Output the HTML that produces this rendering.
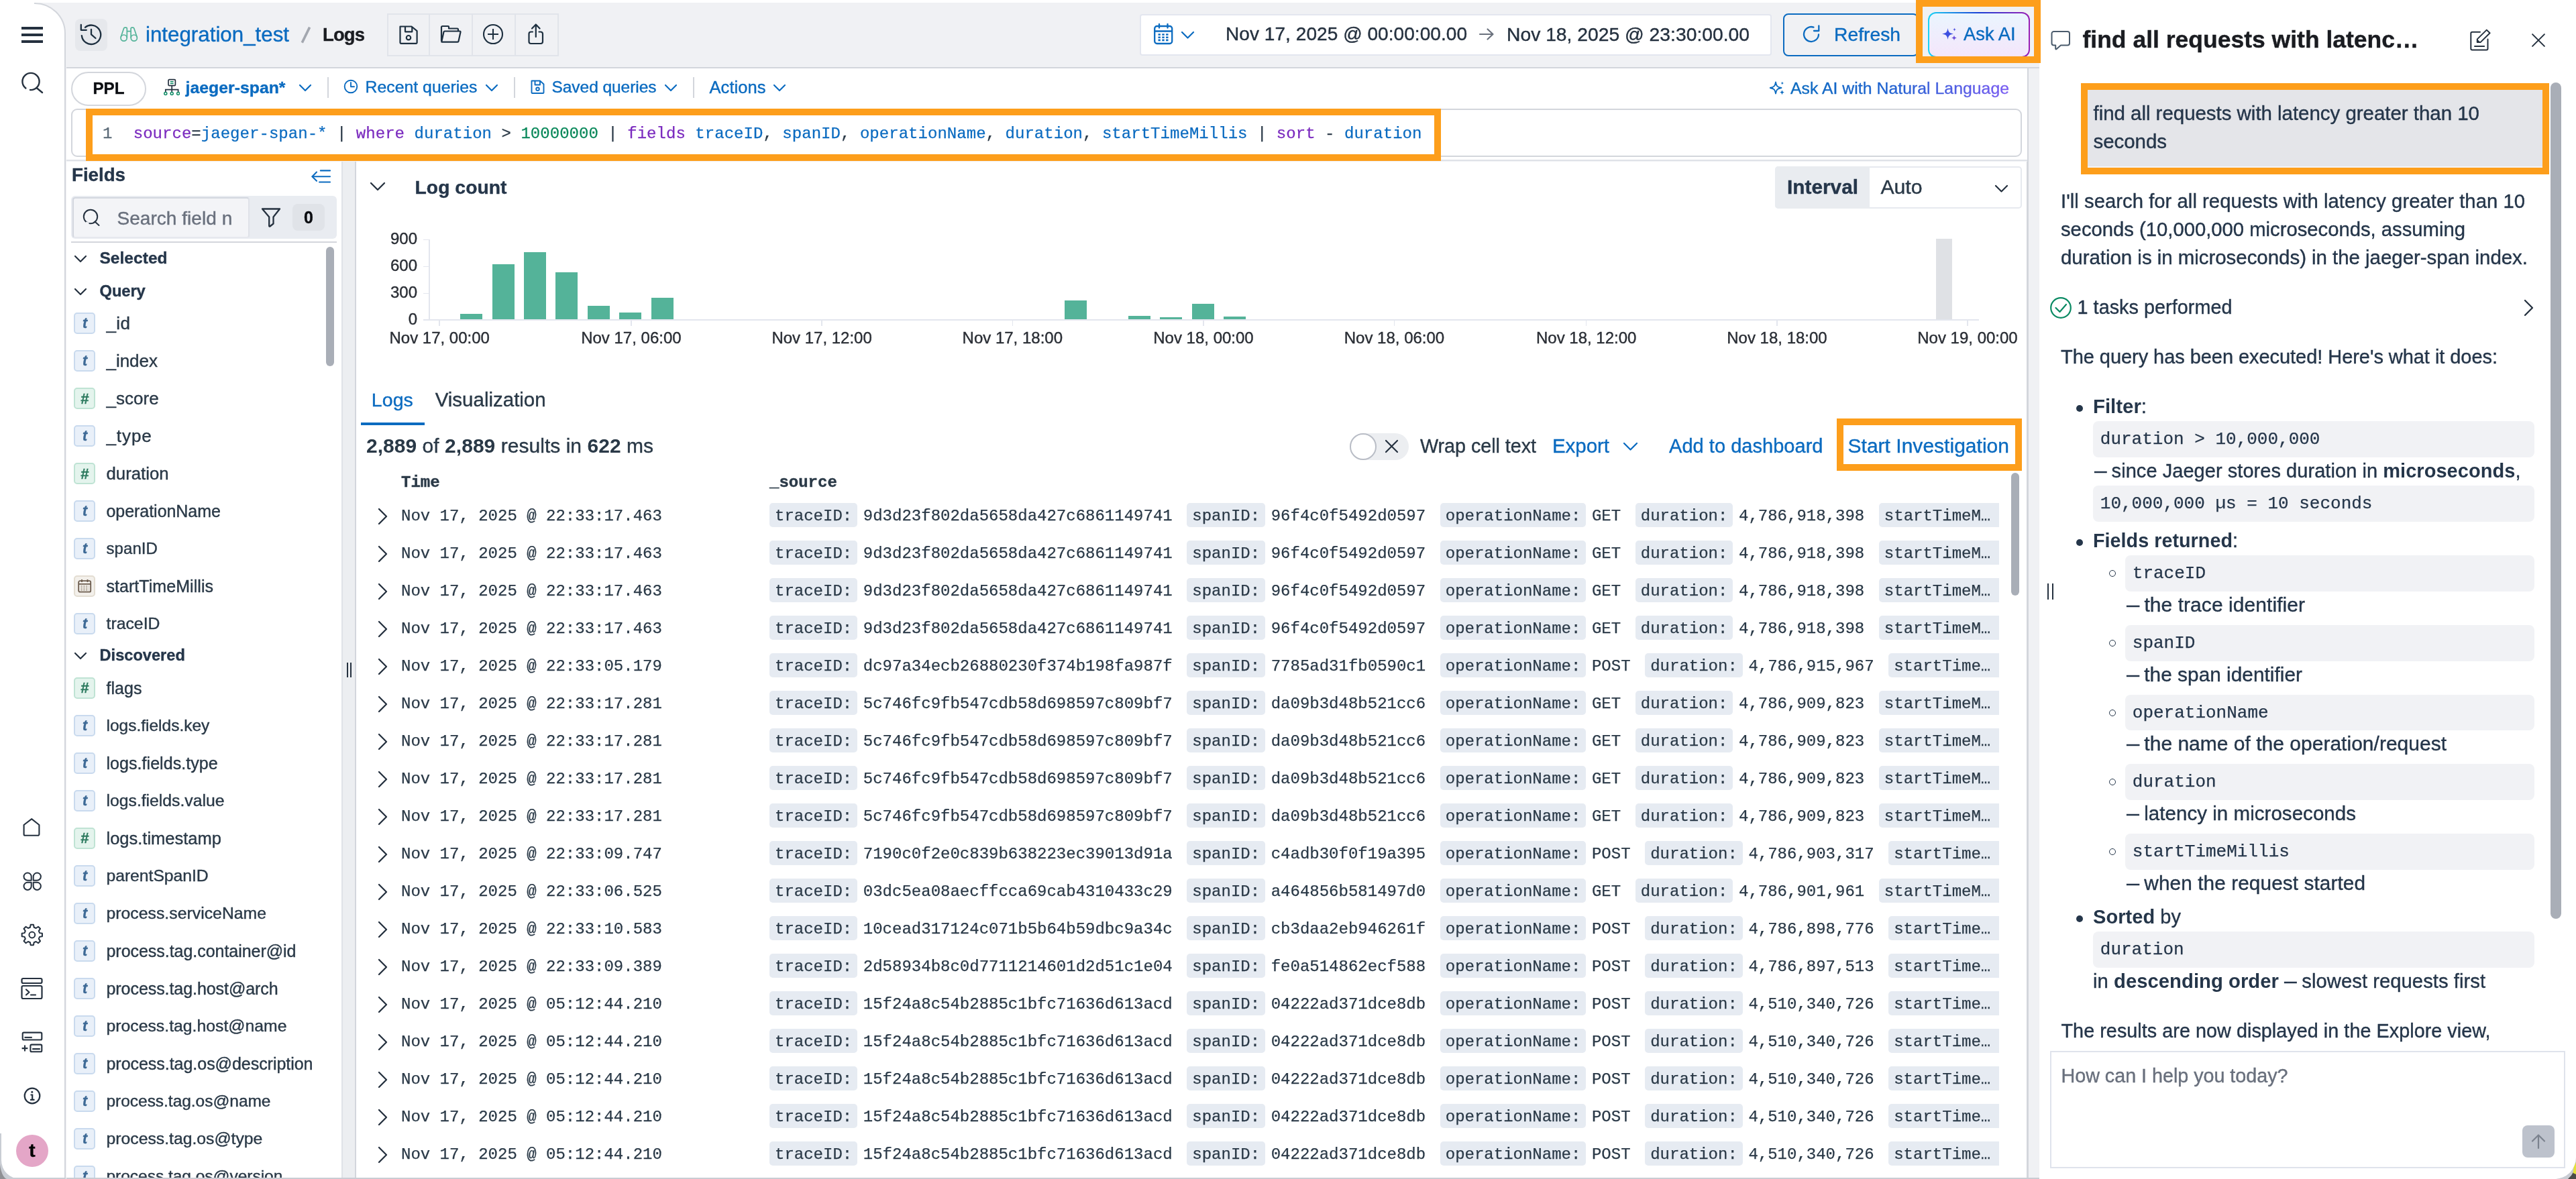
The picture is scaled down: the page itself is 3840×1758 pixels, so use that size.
<!DOCTYPE html>
<html lang="en"><head><meta charset="utf-8"><title>Logs - Explore</title><style>
*{box-sizing:border-box;margin:0;padding:0}
html,body{width:3840px;height:1758px;overflow:hidden;background:#fff}
body{position:relative;font-family:"Liberation Sans",sans-serif;color:#2a3947}
#app{position:absolute;left:0;top:0;width:3840px;height:1758px;will-change:transform}
.a{position:absolute}
.t{white-space:pre;-webkit-text-stroke:.4px}
.t b,b.t{-webkit-text-stroke:0}
b{font-weight:700}
.r{position:absolute;left:1147px;width:1833px;height:44px;overflow:hidden;white-space:nowrap;font:24px/44px 'Liberation Mono',monospace;color:#2a3947;-webkit-text-stroke:.25px}.r i{font-style:normal;display:inline-block;height:36px;line-height:40px;background:#e6ebf2;border-radius:5px;padding:0 8px;margin-right:8.6px}.r u{text-decoration:none;margin-right:21.6px}
</style></head><body><div id="app">
<div class="a" style="left:0px;top:4px;width:3040px;height:1754px;background:#f0f1f4;"></div>
<svg class="a" style="left:0px;top:0px;" width="100" height="1758" viewBox="0 0 100 1758" fill="none"><path d="M0 4 H51 A46 46 0 0 1 97 50 V1758 H0 Z" fill="#fff"/><path d="M51 5 A45 45 0 0 1 97 50 V1758" stroke="#d3d6dc" stroke-width="2"/></svg>
<div class="a" style="left:99px;top:100px;width:2941px;height:2px;background:#d3d6dc;"></div>
<div class="a" style="left:99px;top:102px;width:2923px;height:137px;background:#fff;"></div>
<div class="a" style="left:99px;top:238px;width:2923px;height:2px;background:#dfe2e8;"></div>
<div class="a" style="left:99px;top:241px;width:411px;height:1517px;background:#fff;"></div>
<div class="a" style="left:510px;top:241px;width:19px;height:1515px;background:#eceef1;"></div>
<div class="a" style="left:509px;top:241px;width:2px;height:1515px;background:#dfe2e7;"></div>
<div class="a" style="left:529px;top:241px;width:2494px;height:1517px;background:#fff;border:2px solid #d3d6dc;border-top:0;border-bottom:0;"></div>
<div class="a" style="left:3040px;top:0px;width:800px;height:1758px;background:#fff;"></div>
<div class="a" style="left:3022px;top:102px;width:2px;height:1656px;background:#d3d6dc;"></div>
<div class="a" style="left:32px;top:40px;width:32px;height:4px;background:#25313f;"></div>
<div class="a" style="left:32px;top:50px;width:32px;height:4px;background:#25313f;"></div>
<div class="a" style="left:32px;top:60px;width:32px;height:4px;background:#25313f;"></div>
<svg class="a" style="left:30px;top:105px;" width="38" height="38" viewBox="0 0 38 38" fill="none"><circle cx="16" cy="16.5" r="12.6" stroke="#25313f" stroke-width="2.4"/><path d="M24.5 26 L33 33" stroke="#25313f" stroke-width="2.4" stroke-linecap="round"/><path d="M9 27.5 A12.6 12.6 0 0 0 14 29" stroke="#fff" stroke-width="4"/></svg>
<svg class="a" style="left:32px;top:1218px;" width="32" height="32" viewBox="0 0 32 32" fill="none"><path d="M3.6 12 L15.2 3.2 L26.4 12 V26 a1.8 1.8 0 0 1 -1.8 1.8 H5.4 a1.8 1.8 0 0 1 -1.8 -1.8 Z" stroke="#25313f" stroke-width="2.1" stroke-linejoin="round"/></svg>
<svg class="a" style="left:32px;top:1298px;" width="32" height="32" viewBox="0 0 32 32" fill="none"><path d="M9.1 3.5 A5.6 5.6 0 0 0 3.5 9.1 A5.6 5.6 0 0 0 9.1 14.7 H14.7 V9.1 A5.6 5.6 0 0 0 9.1 3.5 Z" stroke="#25313f" stroke-width="2" stroke-linejoin="round"/><path d="M23.299999999999997 3.5 A5.6 5.6 0 0 1 28.9 9.1 A5.6 5.6 0 0 1 23.299999999999997 14.7 H17.7 V9.1 A5.6 5.6 0 0 1 23.299999999999997 3.5 Z" stroke="#25313f" stroke-width="2" stroke-linejoin="round"/><path d="M9.1 28.9 A5.6 5.6 0 0 1 3.5 23.299999999999997 A5.6 5.6 0 0 1 9.1 17.7 H14.7 V23.299999999999997 A5.6 5.6 0 0 1 9.1 28.9 Z" stroke="#25313f" stroke-width="2" stroke-linejoin="round"/><path d="M23.299999999999997 28.9 A5.6 5.6 0 0 0 28.9 23.299999999999997 A5.6 5.6 0 0 0 23.299999999999997 17.7 H17.7 V23.299999999999997 A5.6 5.6 0 0 0 23.299999999999997 28.9 Z" stroke="#25313f" stroke-width="2" stroke-linejoin="round"/></svg>
<svg class="a" style="left:30px;top:1376px;" width="36" height="36" viewBox="0 0 36 36" fill="none"><path d="M32.95 15.84 L32.95 20.16 L29.04 20.88 L27.78 23.90 L30.04 27.19 L26.99 30.24 L23.70 27.98 L20.68 29.24 L19.96 33.15 L15.64 33.15 L14.92 29.24 L11.90 27.98 L8.61 30.24 L5.56 27.19 L7.82 23.90 L6.56 20.88 L2.65 20.16 L2.65 15.84 L6.56 15.12 L7.82 12.10 L5.56 8.81 L8.61 5.76 L11.90 8.02 L14.92 6.76 L15.64 2.85 L19.96 2.85 L20.68 6.76 L23.70 8.02 L26.99 5.76 L30.04 8.81 L27.78 12.10 L29.04 15.12 Z" stroke="#25313f" stroke-width="2" stroke-linejoin="round"/><circle cx="17.8" cy="18" r="4.4" stroke="#25313f" stroke-width="2"/></svg>
<svg class="a" style="left:30px;top:1456px;" width="36" height="36" viewBox="0 0 36 36" fill="none"><rect x="2.5" y="3" width="30" height="7" rx="2" stroke="#25313f" stroke-width="2.2"/><rect x="2.5" y="14" width="30" height="19" rx="2" stroke="#25313f" stroke-width="2.2"/><path d="M9 19.5 L13.5 23.5 L9 27.5 M16 27.5 H23" stroke="#25313f" stroke-width="2.2" stroke-linecap="round" stroke-linejoin="round"/></svg>
<svg class="a" style="left:30px;top:1536px;" width="36" height="36" viewBox="0 0 36 36" fill="none"><rect x="3.7" y="3.6" width="28.6" height="10.9" rx="1.8" stroke="#25313f" stroke-width="2.1"/><path d="M6.5 10.9 H17.8" stroke="#25313f" stroke-width="2.1"/><rect x="15.4" y="21.6" width="16.9" height="10.7" rx="1.8" stroke="#25313f" stroke-width="2.1"/><path d="M18.2 28.1 H29.8 M2.6 27.1 H11.4 M7 22.6 V31.6" stroke="#25313f" stroke-width="2.1"/></svg>
<svg class="a" style="left:34px;top:1620px;" width="28" height="28" viewBox="0 0 28 28" fill="none"><circle cx="14" cy="14" r="11.3" stroke="#25313f" stroke-width="2.2"/><path d="M11.5 12.5 H14.2 V19.5 M11 19.8 H17.5" stroke="#25313f" stroke-width="2.2"/><circle cx="13.8" cy="8.3" r="1.5" fill="#25313f"/></svg>
<div class="a" style="left:24px;top:1692px;width:48px;height:48px;background:#e4a6c7;border-radius:24px;"></div>
<div class="a t" style="left:43.34px;top:1695px;line-height:42px;font-size:28px;color:#000;font-family:'Liberation Sans',sans-serif;font-weight:700;">t</div>
<div class="a" style="left:0px;top:1756px;width:98px;height:2px;background:#c9cdd4;"></div>
<svg class="a" style="left:0px;top:1690px;" width="40" height="68" viewBox="0 0 40 68" fill="none"><path d="M0 0 V68 H30 A28 28 0 0 1 2 40 V0 Z" fill="#c9cdd4"/><path d="M0 30 V68 H10 A12 30 0 0 1 0 30 Z" fill="#8f9094"/></svg>
<div class="a" style="left:112px;top:28px;width:48px;height:48px;background:#e6e8ec;border-radius:8px;"></div>
<svg class="a" style="left:116px;top:32px;" width="40" height="40" viewBox="0 0 40 40" fill="none"><path d="M5.85 21.1 A14.2 14.2 0 1 0 10.9 8.8" stroke="#1d2f3f" stroke-width="2.3" stroke-linecap="round"/><path d="M4.8 5 V12.8 H12.8" stroke="#1d2f3f" stroke-width="2.3" stroke-linecap="round" stroke-linejoin="round"/><path d="M20 11.8 V19.3 L26.5 25" stroke="#1d2f3f" stroke-width="2.3" stroke-linecap="round" stroke-linejoin="round"/></svg>
<svg class="a" style="left:177px;top:39px;" width="30" height="25" viewBox="0 0 30 25" fill="none"><circle cx="7.6" cy="17.6" r="4.6" stroke="#54b399" stroke-width="1.7"/><circle cx="22.8" cy="17.6" r="4.6" stroke="#54b399" stroke-width="1.7"/><path d="M3.1 16.5 L7.6 3.2 a1.5 1.5 0 0 1 1.4 -1 H11 a1.3 1.3 0 0 1 1.3 1.3 V17.6 M27.3 16.5 L22.8 3.2 a1.5 1.5 0 0 0 -1.4 -1 H19.4 a1.3 1.3 0 0 0 -1.3 1.3 V17.6 M12.3 7.6 H18.1" stroke="#54b399" stroke-width="1.7" stroke-linejoin="round"/></svg>
<div class="a t" style="left:217.00px;top:28.5px;line-height:45px;font-size:31.25px;color:#0b6bc0;font-family:'Liberation Sans',sans-serif;letter-spacing:0.021px;">integration_test</div>
<svg class="a" style="left:444px;top:36px;" width="24" height="32" viewBox="0 0 24 32" fill="none"><path d="M6.3 27.6 L17.6 4.6" stroke="#a3a7af" stroke-width="3.6"/></svg>
<div class="a t" style="left:481.00px;top:28.5px;line-height:45px;font-size:27.5px;color:#1a1c21;font-family:'Liberation Sans',sans-serif;font-weight:700;letter-spacing:-0.897px;">Logs</div>
<div class="a" style="left:577px;top:20px;width:256px;height:64px;border:2px solid #e1e4ea;"></div>
<div class="a" style="left:639px;top:22px;width:2px;height:60px;background:#e1e4ea;"></div>
<div class="a" style="left:703px;top:22px;width:2px;height:60px;background:#e1e4ea;"></div>
<div class="a" style="left:767px;top:22px;width:2px;height:60px;background:#e1e4ea;"></div>
<svg class="a" style="left:592px;top:35px;" width="34" height="34" viewBox="0 0 34 34" fill="none"><path d="M4.5 4.5 H21.5 L29.6 11.2 V28.6 a1.2 1.2 0 0 1 -1.2 1.2 H5.7 a1.2 1.2 0 0 1 -1.2 -1.2 Z" stroke="#1d2f3f" stroke-width="2.2" stroke-linejoin="round"/><path d="M12 5 V12.3 H22.3 V5" stroke="#1d2f3f" stroke-width="2.2" stroke-linejoin="round"/><circle cx="17" cy="21.2" r="3.2" stroke="#1d2f3f" stroke-width="2.2"/></svg>
<svg class="a" style="left:654px;top:35px;" width="36" height="32" viewBox="0 0 36 32" fill="none"><path d="M4 26 V5.5 a1.5 1.5 0 0 1 1.5 -1.5 H14 a1 1 0 0 1 1 1 V7.5 H27.5 a1.5 1.5 0 0 1 1.5 1.5 V11.5" stroke="#1d2f3f" stroke-width="2.2" stroke-linejoin="round"/><path d="M4.2 27.5 L7.5 12.5 a1.5 1.5 0 0 1 1.4 -1 H31.5 a1 1 0 0 1 1 1.3 L29.5 26.5 a1.5 1.5 0 0 1 -1.5 1.2 H5 a1 1 0 0 1 -0.8 -0.2 Z" stroke="#1d2f3f" stroke-width="2.2" stroke-linejoin="round"/></svg>
<svg class="a" style="left:718px;top:34px;" width="34" height="34" viewBox="0 0 34 34" fill="none"><circle cx="17" cy="17" r="14" stroke="#1d2f3f" stroke-width="2.1"/><path d="M9 17 H25 M17 9 V25" stroke="#1d2f3f" stroke-width="2.1"/></svg>
<svg class="a" style="left:784px;top:33px;" width="30" height="36" viewBox="0 0 30 36" fill="none"><path d="M10 14.5 H7.5 a3 3 0 0 0 -3 3 V29 a3 3 0 0 0 3 3 H22 a3 3 0 0 0 3 -3 V17.5 a3 3 0 0 0 -3 -3 H19.5" stroke="#1d2f3f" stroke-width="2.2" stroke-linecap="round"/><path d="M14.8 22 V4 M9 9.5 L14.8 3.5 L20.6 9.5" stroke="#1d2f3f" stroke-width="2.2" stroke-linecap="round" stroke-linejoin="round"/></svg>
<div class="a" style="left:1699px;top:21px;width:942px;height:62px;background:#fff;border:2px solid #e3e6ef;border-radius:4px;"></div>
<svg class="a" style="left:1719px;top:34px;" width="32" height="34" viewBox="0 0 32 34" fill="none"><rect x="2.2" y="5" width="26" height="26" rx="3.5" stroke="#0b6bc0" stroke-width="2.3"/><path d="M2.5 12.5 H28 M9 2 V7.5 M21.5 2 V7.5" stroke="#0b6bc0" stroke-width="2.3" stroke-linecap="round"/><path d="M7.5 17.5 H23 M7.5 21.7 H23 M7.5 25.9 H23" stroke="#0b6bc0" stroke-width="2.6" stroke-dasharray="3.4 2.4"/></svg>
<svg class="a" style="left:1759.5px;top:45.75px;" width="21" height="12.5" viewBox="0 0 21 12.5" fill="none"><path d="M2 2 L10.5 10.5 L19 2" stroke="#0b6bc0" stroke-width="2.2" stroke-linecap="round" stroke-linejoin="round"/></svg>
<div class="a t" style="left:1827.00px;top:30px;line-height:42px;font-size:28px;color:#25313f;font-family:'Liberation Sans',sans-serif;letter-spacing:0.061px;">Nov 17, 2025 @ 00:00:00.00</div>
<svg class="a" style="left:2204px;top:40px;" width="26" height="22" viewBox="0 0 26 22" fill="none"><path d="M2 11 H21 M13.5 3.5 L21.5 11 L13.5 18.5" stroke="#6a717d" stroke-width="2.2" stroke-linecap="round" stroke-linejoin="round"/></svg>
<div class="a t" style="left:2246.00px;top:30px;line-height:42px;font-size:28.25px;color:#25313f;font-family:'Liberation Sans',sans-serif;letter-spacing:0.013px;">Nov 18, 2025 @ 23:30:00.00</div>
<div class="a" style="left:2658px;top:20px;width:202px;height:64px;border:2px solid #0b6bc0;border-radius:8px;"></div>
<svg class="a" style="left:2686px;top:36px;" width="30" height="30" viewBox="0 0 30 30" fill="none"><path d="M25 15.5 A11 11 0 1 1 17.5 4.6" stroke="#0b6bc0" stroke-width="2.3" stroke-linecap="round"/><path d="M25.3 2.5 V10 H18" stroke="#0b6bc0" stroke-width="2.3" stroke-linecap="round" stroke-linejoin="round"/></svg>
<div class="a t" style="left:2734.00px;top:30px;line-height:42px;font-size:28.25px;color:#0b6bc0;font-family:'Liberation Sans',sans-serif;letter-spacing:0.013px;">Refresh</div>
<div class="a" style="left:2856px;top:0px;width:186px;height:94px;background:#f0f1f4;border:10px solid #fd9e1b;"></div>
<div class="a" style="left:2874px;top:18px;width:152px;height:68px;border-radius:12px;padding:2px;background:linear-gradient(90deg,#19d3f5 0%,#1a3fd6 50%,#9a1fb5 100%)"><div style="width:100%;height:100%;border-radius:10px;background:linear-gradient(180deg,#eaf5fe 0%,#f4e6fb 100%)"></div></div>
<div class="a" style="left:2866px;top:84px;width:166px;height:10px;background:#fd9e1b;"></div>
<svg class="a" style="left:2895px;top:40px;" width="24" height="24" viewBox="0 0 24 24" fill="none"><path d="M8.5 2 C9.5 8 11 9.5 17 10.5 C11 11.5 9.5 13 8.5 19 C7.5 13 6 11.5 0 10.5 C6 9.5 7.5 8 8.5 2 Z" fill="#3d4fe0"/><path d="M18 12.5 C18.5 15.2 19.3 16 22 16.5 C19.3 17 18.5 17.8 18 20.5 C17.5 17.8 16.7 17 14 16.5 C16.7 16 17.5 15.2 18 12.5 Z" fill="#6a4fd8"/><path d="M18.5 1.5 C18.8 3.3 19.2 3.7 21 4 C19.2 4.3 18.8 4.7 18.5 6.5 C18.2 4.7 17.8 4.3 16 4 C17.8 3.7 18.2 3.3 18.5 1.5 Z" fill="#4a4fe0"/></svg>
<div class="a t" style="left:2927.00px;top:30px;line-height:42px;font-size:27.25px;color:#0b6bc0;font-family:'Liberation Sans',sans-serif;letter-spacing:0.052px;">Ask AI</div>
<div class="a" style="left:106px;top:106.5px;width:112px;height:51px;background:#fff;border:2px solid #d3d6dc;border-radius:26px;"></div>
<div class="a t" style="left:138.50px;top:112.5px;line-height:38px;font-size:24.25px;color:#0a0c10;font-family:'Liberation Sans',sans-serif;font-weight:700;letter-spacing:-0.082px;">PPL</div>
<svg class="a" style="left:244px;top:116px;" width="24" height="28" viewBox="0 0 24 28" fill="none"><rect x="7" y="2.6" width="10.4" height="9" rx="1.4" stroke="#25313f" stroke-width="1.7"/><path d="M9.8 5.8 H14.6 M9.8 8.5 H14.6" stroke="#0a8a63" stroke-width="1.5"/><path d="M12.2 11.8 V17.4 M2.8 21 V17.6 H21.6 V21 M12.2 17.6 V21" stroke="#25313f" stroke-width="1.7"/><circle cx="2.8" cy="23.4" r="2" stroke="#0a8a63" stroke-width="1.5"/><circle cx="12.2" cy="23.4" r="2" stroke="#0a8a63" stroke-width="1.5"/><circle cx="21.6" cy="23.4" r="2" stroke="#0a8a63" stroke-width="1.5"/></svg>
<div class="a t" style="left:276.50px;top:110.5px;line-height:39px;font-size:24.75px;color:#0b6bc0;font-family:'Liberation Sans',sans-serif;font-weight:700;letter-spacing:0.040px;">jaeger-span*</div>
<svg class="a" style="left:444.5px;top:124.5px;" width="20" height="12" viewBox="0 0 20 12" fill="none"><path d="M2 2 L10 10 L18 2" stroke="#0b6bc0" stroke-width="2.2" stroke-linecap="round" stroke-linejoin="round"/></svg>
<div class="a" style="left:488px;top:115px;width:2px;height:31px;background:#d3d6dc;"></div>
<svg class="a" style="left:512px;top:118px;" width="22" height="22" viewBox="0 0 22 22" fill="none"><circle cx="11" cy="11" r="9.3" stroke="#0b6bc0" stroke-width="1.9"/><path d="M11 5 V11.3 H16" stroke="#0b6bc0" stroke-width="1.9" stroke-linecap="round" stroke-linejoin="round"/></svg>
<div class="a t" style="left:544.50px;top:111px;line-height:38px;font-size:24.75px;color:#0b6bc0;font-family:'Liberation Sans',sans-serif;letter-spacing:0.040px;">Recent queries</div>
<svg class="a" style="left:722.5px;top:124.5px;" width="20" height="12" viewBox="0 0 20 12" fill="none"><path d="M2 2 L10 10 L18 2" stroke="#0b6bc0" stroke-width="2.2" stroke-linecap="round" stroke-linejoin="round"/></svg>
<div class="a" style="left:766px;top:115px;width:2px;height:31px;background:#d3d6dc;"></div>
<svg class="a" style="left:790px;top:118px;" width="24" height="24" viewBox="0 0 24 24" fill="none"><path d="M2.5 2.5 H15 L20.5 7.5 V20 a1 1 0 0 1 -1 1 H3.5 a1 1 0 0 1 -1 -1 Z" stroke="#0b6bc0" stroke-width="1.9" stroke-linejoin="round"/><path d="M7.5 3 V8.5 H15 V3" stroke="#0b6bc0" stroke-width="1.9" stroke-linejoin="round"/><circle cx="11.5" cy="14.8" r="2.3" stroke="#0b6bc0" stroke-width="1.9"/></svg>
<div class="a t" style="left:822.50px;top:111px;line-height:38px;font-size:24.5px;color:#0b6bc0;font-family:'Liberation Sans',sans-serif;letter-spacing:-0.053px;">Saved queries</div>
<svg class="a" style="left:989.5px;top:124.5px;" width="20" height="12" viewBox="0 0 20 12" fill="none"><path d="M2 2 L10 10 L18 2" stroke="#0b6bc0" stroke-width="2.2" stroke-linecap="round" stroke-linejoin="round"/></svg>
<div class="a" style="left:1033px;top:115px;width:2px;height:31px;background:#d3d6dc;"></div>
<div class="a t" style="left:1057.50px;top:111px;line-height:38px;font-size:25.5px;color:#0b6bc0;font-family:'Liberation Sans',sans-serif;letter-spacing:0.063px;">Actions</div>
<svg class="a" style="left:1152px;top:124.5px;" width="20" height="12" viewBox="0 0 20 12" fill="none"><path d="M2 2 L10 10 L18 2" stroke="#0b6bc0" stroke-width="2.2" stroke-linecap="round" stroke-linejoin="round"/></svg>
<svg class="a" style="left:2638px;top:120px;" width="24" height="24" viewBox="0 0 24 24" fill="none"><path d="M9 2.5 C10 8.5 11.5 10 17.5 11 C11.5 12 10 13.5 9 19.5 C8 13.5 6.5 12 0.5 11 C6.5 10 8 8.5 9 2.5 Z" stroke="#0b6bc0" stroke-width="1.8" stroke-linejoin="round"/><path d="M18.5 14 C19 16.5 19.6 17.2 22 17.7 C19.6 18.2 19 18.9 18.5 21.4 C18 18.9 17.4 18.2 15 17.7 C17.4 17.2 18 16.5 18.5 14 Z" fill="#0b6bc0"/><path d="M18.8 1.5 C19.1 3.3 19.5 3.7 21.3 4 C19.5 4.3 19.1 4.7 18.8 6.5 C18.5 4.7 18.1 4.3 16.3 4 C18.1 3.7 18.5 3.3 18.8 1.5 Z" fill="#0b6bc0"/></svg>
<div class="a t" style="left:2669.00px;top:113px;line-height:38px;font-size:24.75px;color:#0b6bc0;font-family:'Liberation Sans',sans-serif;letter-spacing:0.048px;background:linear-gradient(90deg,#0b6bc0 0%,#1f62d0 45%,#7a5cf2 100%);-webkit-background-clip:text;background-clip:text;color:transparent;">Ask AI with Natural Language</div>
<div class="a" style="left:106px;top:162px;width:2908px;height:72px;background:#fff;border:2px solid #d3d6dc;border-radius:9px;"></div>
<div class="a" style="left:128px;top:162px;width:2020px;height:78px;background:#fff;border:10px solid #fd9e1b;"></div>
<div class="a t" style="left:153.00px;top:181.5px;line-height:36px;font-size:24px;color:#5c6b78;font-family:'Liberation Mono',monospace;-webkit-text-stroke:.25px;">1</div>
<div class="a t" style="left:198.70px;top:181.5px;line-height:36px;font-size:24px;color:#2a3947;font-family:'Liberation Mono',monospace;-webkit-text-stroke:.25px;letter-spacing:0.038px;"><span style="color:#7b2bbf;">source</span><span style="color:#2a3947;">=</span><span style="color:#0b6bc0;">jaeger-span-*</span><span style="color:#2a3947;"> | </span><span style="color:#7b2bbf;">where</span><span style="color:#2a3947;"> </span><span style="color:#0b6bc0;">duration</span><span style="color:#2a3947;"> &gt; </span><span style="color:#09885a;">10000000</span><span style="color:#2a3947;"> | </span><span style="color:#7b2bbf;">fields</span><span style="color:#2a3947;"> </span><span style="color:#0b6bc0;">traceID</span><span style="color:#2a3947;">, </span><span style="color:#0b6bc0;">spanID</span><span style="color:#2a3947;">, </span><span style="color:#0b6bc0;">operationName</span><span style="color:#2a3947;">, </span><span style="color:#0b6bc0;">duration</span><span style="color:#2a3947;">, </span><span style="color:#0b6bc0;">startTimeMillis</span><span style="color:#2a3947;"> | </span><span style="color:#7b2bbf;">sort</span><span style="color:#2a3947;"> - </span><span style="color:#0b6bc0;">duration</span></div>
<div class="a t" style="left:107.00px;top:239.5px;line-height:42px;font-size:27.75px;color:#25364a;font-family:'Liberation Sans',sans-serif;font-weight:700;letter-spacing:-0.038px;">Fields</div>
<svg class="a" style="left:462px;top:252px;" width="32" height="22" viewBox="0 0 32 22" fill="none"><path d="M15.8 2.4 H30 M3.6 11.2 H30 M14.1 19.5 H30" stroke="#0b6bc0" stroke-width="2.1" stroke-linecap="round"/><path d="M10 4.6 L3.4 11.2 L10 17.8" stroke="#0b6bc0" stroke-width="2.1" stroke-linecap="round" stroke-linejoin="round"/></svg>
<div class="a" style="left:106px;top:292px;width:396px;height:64px;background:#e9ecf1;border-radius:6px;"></div>
<div class="a" style="left:108px;top:294px;width:264px;height:61px;background:#f3f4f7;border:2px solid #d3d7df;border-radius:4px;border-bottom-color:#e6e8ee;border-right-color:#dfe2e8;"></div>
<svg class="a" style="left:122px;top:310px;" width="28" height="28" viewBox="0 0 28 28" fill="none"><circle cx="13" cy="13" r="10.2" stroke="#25313f" stroke-width="2"/><path d="M19.5 20.5 L25.5 26" stroke="#25313f" stroke-width="2" stroke-linecap="round"/><path d="M6 21.5 A10.2 10.2 0 0 0 10.5 23.4" stroke="#f3f4f7" stroke-width="3.4"/></svg>
<div class="a t" style="left:174.5px;top:304.5px;width:172.6px;overflow:hidden;line-height:42px;font-size:28px;letter-spacing:0.04px;color:#69707d">Search field names</div>
<svg class="a" style="left:388px;top:308px;" width="32" height="32" viewBox="0 0 32 32" fill="none"><path d="M3 3.5 H29 L19.5 15.5 V25.5 L14.5 29.5 a0.8 0.8 0 0 1 -1.3 -0.6 V15.5 Z" stroke="#25313f" stroke-width="2.3" stroke-linejoin="round"/></svg>
<div class="a" style="left:436px;top:304px;width:48px;height:40px;background:#e0e3e8;border-radius:8px;"></div>
<div class="a t" style="left:453.05px;top:305px;line-height:38px;font-size:25px;color:#0a0c10;font-family:'Liberation Sans',sans-serif;font-weight:700;">0</div>
<div class="a" style="left:106px;top:360px;width:396px;height:2px;background:#d3d6dc;"></div>
<div class="a" style="left:486px;top:368px;width:12px;height:178px;background:#a9aeb7;border-radius:6px;"></div>
<svg class="a" style="left:110px;top:380px;" width="20" height="12" viewBox="0 0 20 12" fill="none"><path d="M2 2 L10 10 L18 2" stroke="#25313f" stroke-width="2.2" stroke-linecap="round" stroke-linejoin="round"/></svg>
<div class="a t" style="left:148.50px;top:367px;line-height:36px;font-size:24.5px;color:#25364a;font-family:'Liberation Sans',sans-serif;font-weight:700;letter-spacing:0.032px;">Selected</div>
<svg class="a" style="left:110px;top:429px;" width="20" height="12" viewBox="0 0 20 12" fill="none"><path d="M2 2 L10 10 L18 2" stroke="#25313f" stroke-width="2.2" stroke-linecap="round" stroke-linejoin="round"/></svg>
<div class="a t" style="left:148.50px;top:416px;line-height:36px;font-size:23.75px;color:#25364a;font-family:'Liberation Sans',sans-serif;font-weight:700;letter-spacing:-0.085px;">Query</div>
<div class="a" style="left:110px;top:466px;width:32px;height:32px;background:#e9f0f9;border:2px solid #c9daee;border-radius:5px;"></div>
<div class="a t" style="left:122.92px;top:466px;line-height:32px;font-size:21.5px;color:#3e6a96;font-family:'Liberation Sans',sans-serif;font-weight:700;font-style:italic;">t</div>
<div class="a t" style="left:158.50px;top:464px;line-height:36px;font-size:26px;color:#2a3947;font-family:'Liberation Sans',sans-serif;letter-spacing:0.401px;">_id</div>
<div class="a" style="left:110px;top:522px;width:32px;height:32px;background:#e9f0f9;border:2px solid #c9daee;border-radius:5px;"></div>
<div class="a t" style="left:122.92px;top:522px;line-height:32px;font-size:21.5px;color:#3e6a96;font-family:'Liberation Sans',sans-serif;font-weight:700;font-style:italic;">t</div>
<div class="a t" style="left:158.50px;top:520px;line-height:36px;font-size:26px;color:#2a3947;font-family:'Liberation Sans',sans-serif;letter-spacing:-0.024px;">_index</div>
<div class="a" style="left:110px;top:578px;width:32px;height:32px;background:#e4f4ed;border:2px solid #bfe3d4;border-radius:5px;"></div>
<div class="a t" style="left:119.88px;top:577.5px;line-height:33px;font-size:22px;color:#2d7a5f;font-family:'Liberation Sans',sans-serif;font-weight:700;font-style:italic;">#</div>
<div class="a t" style="left:158.50px;top:576px;line-height:36px;font-size:26px;color:#2a3947;font-family:'Liberation Sans',sans-serif;letter-spacing:0.032px;">_score</div>
<div class="a" style="left:110px;top:634px;width:32px;height:32px;background:#e9f0f9;border:2px solid #c9daee;border-radius:5px;"></div>
<div class="a t" style="left:122.92px;top:634px;line-height:32px;font-size:21.5px;color:#3e6a96;font-family:'Liberation Sans',sans-serif;font-weight:700;font-style:italic;">t</div>
<div class="a t" style="left:158.50px;top:632px;line-height:36px;font-size:26px;color:#2a3947;font-family:'Liberation Sans',sans-serif;letter-spacing:0.899px;">_type</div>
<div class="a" style="left:110px;top:690px;width:32px;height:32px;background:#e4f4ed;border:2px solid #bfe3d4;border-radius:5px;"></div>
<div class="a t" style="left:119.88px;top:689.5px;line-height:33px;font-size:22px;color:#2d7a5f;font-family:'Liberation Sans',sans-serif;font-weight:700;font-style:italic;">#</div>
<div class="a t" style="left:158.50px;top:688px;line-height:36px;font-size:25.75px;color:#2a3947;font-family:'Liberation Sans',sans-serif;letter-spacing:0.006px;">duration</div>
<div class="a" style="left:110px;top:746px;width:32px;height:32px;background:#e9f0f9;border:2px solid #c9daee;border-radius:5px;"></div>
<div class="a t" style="left:122.92px;top:746px;line-height:32px;font-size:21.5px;color:#3e6a96;font-family:'Liberation Sans',sans-serif;font-weight:700;font-style:italic;">t</div>
<div class="a t" style="left:158.50px;top:744px;line-height:36px;font-size:25px;color:#2a3947;font-family:'Liberation Sans',sans-serif;letter-spacing:-0.045px;">operationName</div>
<div class="a" style="left:110px;top:802px;width:32px;height:32px;background:#e9f0f9;border:2px solid #c9daee;border-radius:5px;"></div>
<div class="a t" style="left:122.92px;top:802px;line-height:32px;font-size:21.5px;color:#3e6a96;font-family:'Liberation Sans',sans-serif;font-weight:700;font-style:italic;">t</div>
<div class="a t" style="left:158.50px;top:800px;line-height:36px;font-size:24px;color:#2a3947;font-family:'Liberation Sans',sans-serif;letter-spacing:0.071px;">spanID</div>
<div class="a" style="left:110px;top:858px;width:32px;height:32px;background:#f3f0eb;border:2px solid #e3ddd2;border-radius:5px;"></div>
<svg class="a" style="left:116px;top:863px;" width="21" height="21" viewBox="0 0 21 21" fill="none"><rect x="1.2" y="3.2" width="18" height="16.5" rx="2" stroke="#6b5b4d" stroke-width="1.8"/><path d="M1.5 7.8 H19 M6 1 V5 M14.5 1 V5" stroke="#6b5b4d" stroke-width="1.8"/><path d="M4.5 11 H16.5 M4.5 13.8 H16.5 M4.5 16.6 H16.5" stroke="#a09384" stroke-width="1.6" stroke-dasharray="2.2 1.6"/></svg>
<div class="a t" style="left:158.50px;top:856px;line-height:36px;font-size:25px;color:#2a3947;font-family:'Liberation Sans',sans-serif;letter-spacing:0.050px;">startTimeMillis</div>
<div class="a" style="left:110px;top:914px;width:32px;height:32px;background:#e9f0f9;border:2px solid #c9daee;border-radius:5px;"></div>
<div class="a t" style="left:122.92px;top:914px;line-height:32px;font-size:21.5px;color:#3e6a96;font-family:'Liberation Sans',sans-serif;font-weight:700;font-style:italic;">t</div>
<div class="a t" style="left:158.50px;top:912px;line-height:36px;font-size:24.75px;color:#2a3947;font-family:'Liberation Sans',sans-serif;letter-spacing:0.021px;">traceID</div>
<svg class="a" style="left:110px;top:972px;" width="20" height="12" viewBox="0 0 20 12" fill="none"><path d="M2 2 L10 10 L18 2" stroke="#25313f" stroke-width="2.2" stroke-linecap="round" stroke-linejoin="round"/></svg>
<div class="a t" style="left:148.50px;top:959px;line-height:36px;font-size:23.5px;color:#25364a;font-family:'Liberation Sans',sans-serif;font-weight:700;letter-spacing:0.066px;">Discovered</div>
<div class="a" style="left:110px;top:1009.5px;width:32px;height:32px;background:#e4f4ed;border:2px solid #bfe3d4;border-radius:5px;"></div>
<div class="a t" style="left:119.88px;top:1009px;line-height:33px;font-size:22px;color:#2d7a5f;font-family:'Liberation Sans',sans-serif;font-weight:700;font-style:italic;">#</div>
<div class="a t" style="left:158.50px;top:1007.5px;line-height:36px;font-size:25px;color:#2a3947;font-family:'Liberation Sans',sans-serif;letter-spacing:0.048px;">flags</div>
<div class="a" style="left:110px;top:1065.5px;width:32px;height:32px;background:#e9f0f9;border:2px solid #c9daee;border-radius:5px;"></div>
<div class="a t" style="left:122.92px;top:1065.5px;line-height:32px;font-size:21.5px;color:#3e6a96;font-family:'Liberation Sans',sans-serif;font-weight:700;font-style:italic;">t</div>
<div class="a t" style="left:158.50px;top:1063.5px;line-height:36px;font-size:24.5px;color:#2a3947;font-family:'Liberation Sans',sans-serif;letter-spacing:-0.006px;">logs.fields.key</div>
<div class="a" style="left:110px;top:1121.5px;width:32px;height:32px;background:#e9f0f9;border:2px solid #c9daee;border-radius:5px;"></div>
<div class="a t" style="left:122.92px;top:1121.5px;line-height:32px;font-size:21.5px;color:#3e6a96;font-family:'Liberation Sans',sans-serif;font-weight:700;font-style:italic;">t</div>
<div class="a t" style="left:158.50px;top:1119.5px;line-height:36px;font-size:25px;color:#2a3947;font-family:'Liberation Sans',sans-serif;letter-spacing:0.049px;">logs.fields.type</div>
<div class="a" style="left:110px;top:1177.5px;width:32px;height:32px;background:#e9f0f9;border:2px solid #c9daee;border-radius:5px;"></div>
<div class="a t" style="left:122.92px;top:1177.5px;line-height:32px;font-size:21.5px;color:#3e6a96;font-family:'Liberation Sans',sans-serif;font-weight:700;font-style:italic;">t</div>
<div class="a t" style="left:158.50px;top:1175.5px;line-height:36px;font-size:24.75px;color:#2a3947;font-family:'Liberation Sans',sans-serif;letter-spacing:-0.007px;">logs.fields.value</div>
<div class="a" style="left:110px;top:1233.5px;width:32px;height:32px;background:#e4f4ed;border:2px solid #bfe3d4;border-radius:5px;"></div>
<div class="a t" style="left:119.88px;top:1233px;line-height:33px;font-size:22px;color:#2d7a5f;font-family:'Liberation Sans',sans-serif;font-weight:700;font-style:italic;">#</div>
<div class="a t" style="left:158.50px;top:1231.5px;line-height:36px;font-size:25.5px;color:#2a3947;font-family:'Liberation Sans',sans-serif;">logs.timestamp</div>
<div class="a" style="left:110px;top:1289.5px;width:32px;height:32px;background:#e9f0f9;border:2px solid #c9daee;border-radius:5px;"></div>
<div class="a t" style="left:122.92px;top:1289.5px;line-height:32px;font-size:21.5px;color:#3e6a96;font-family:'Liberation Sans',sans-serif;font-weight:700;font-style:italic;">t</div>
<div class="a t" style="left:158.50px;top:1287.5px;line-height:36px;font-size:24.75px;color:#2a3947;font-family:'Liberation Sans',sans-serif;letter-spacing:-0.049px;">parentSpanID</div>
<div class="a" style="left:110px;top:1345.5px;width:32px;height:32px;background:#e9f0f9;border:2px solid #c9daee;border-radius:5px;"></div>
<div class="a t" style="left:122.92px;top:1345.5px;line-height:32px;font-size:21.5px;color:#3e6a96;font-family:'Liberation Sans',sans-serif;font-weight:700;font-style:italic;">t</div>
<div class="a t" style="left:158.50px;top:1343.5px;line-height:36px;font-size:24.75px;color:#2a3947;font-family:'Liberation Sans',sans-serif;letter-spacing:0.030px;">process.serviceName</div>
<div class="a" style="left:110px;top:1401.5px;width:32px;height:32px;background:#e9f0f9;border:2px solid #c9daee;border-radius:5px;"></div>
<div class="a t" style="left:122.92px;top:1401.5px;line-height:32px;font-size:21.5px;color:#3e6a96;font-family:'Liberation Sans',sans-serif;font-weight:700;font-style:italic;">t</div>
<div class="a t" style="left:158.50px;top:1399.5px;line-height:36px;font-size:25px;color:#2a3947;font-family:'Liberation Sans',sans-serif;letter-spacing:-0.038px;">process.tag.container@id</div>
<div class="a" style="left:110px;top:1457.5px;width:32px;height:32px;background:#e9f0f9;border:2px solid #c9daee;border-radius:5px;"></div>
<div class="a t" style="left:122.92px;top:1457.5px;line-height:32px;font-size:21.5px;color:#3e6a96;font-family:'Liberation Sans',sans-serif;font-weight:700;font-style:italic;">t</div>
<div class="a t" style="left:158.50px;top:1455.5px;line-height:36px;font-size:25px;color:#2a3947;font-family:'Liberation Sans',sans-serif;letter-spacing:-0.063px;">process.tag.host@arch</div>
<div class="a" style="left:110px;top:1513.5px;width:32px;height:32px;background:#e9f0f9;border:2px solid #c9daee;border-radius:5px;"></div>
<div class="a t" style="left:122.92px;top:1513.5px;line-height:32px;font-size:21.5px;color:#3e6a96;font-family:'Liberation Sans',sans-serif;font-weight:700;font-style:italic;">t</div>
<div class="a t" style="left:158.50px;top:1511.5px;line-height:36px;font-size:24.75px;color:#2a3947;font-family:'Liberation Sans',sans-serif;letter-spacing:0.013px;">process.tag.host@name</div>
<div class="a" style="left:110px;top:1569.5px;width:32px;height:32px;background:#e9f0f9;border:2px solid #c9daee;border-radius:5px;"></div>
<div class="a t" style="left:122.92px;top:1569.5px;line-height:32px;font-size:21.5px;color:#3e6a96;font-family:'Liberation Sans',sans-serif;font-weight:700;font-style:italic;">t</div>
<div class="a t" style="left:158.50px;top:1567.5px;line-height:36px;font-size:25px;color:#2a3947;font-family:'Liberation Sans',sans-serif;letter-spacing:-0.035px;">process.tag.os@description</div>
<div class="a" style="left:110px;top:1625.5px;width:32px;height:32px;background:#e9f0f9;border:2px solid #c9daee;border-radius:5px;"></div>
<div class="a t" style="left:122.92px;top:1625.5px;line-height:32px;font-size:21.5px;color:#3e6a96;font-family:'Liberation Sans',sans-serif;font-weight:700;font-style:italic;">t</div>
<div class="a t" style="left:158.50px;top:1623.5px;line-height:36px;font-size:24.5px;color:#2a3947;font-family:'Liberation Sans',sans-serif;letter-spacing:-0.028px;">process.tag.os@name</div>
<div class="a" style="left:110px;top:1681.5px;width:32px;height:32px;background:#e9f0f9;border:2px solid #c9daee;border-radius:5px;"></div>
<div class="a t" style="left:122.92px;top:1681.5px;line-height:32px;font-size:21.5px;color:#3e6a96;font-family:'Liberation Sans',sans-serif;font-weight:700;font-style:italic;">t</div>
<div class="a t" style="left:158.50px;top:1679.5px;line-height:36px;font-size:24.75px;color:#2a3947;font-family:'Liberation Sans',sans-serif;">process.tag.os@type</div>
<div class="a" style="left:110px;top:1737.5px;width:32px;height:32px;background:#e9f0f9;border:2px solid #c9daee;border-radius:5px;"></div>
<div class="a t" style="left:122.92px;top:1737.5px;line-height:32px;font-size:21.5px;color:#3e6a96;font-family:'Liberation Sans',sans-serif;font-weight:700;font-style:italic;">t</div>
<div class="a t" style="left:158.50px;top:1735.5px;line-height:36px;font-size:24.5px;color:#2a3947;font-family:'Liberation Sans',sans-serif;letter-spacing:-0.019px;">process.tag.os@version</div>
<div class="a" style="left:99px;top:1756px;width:2941px;height:2px;background:#c9ccd3;"></div>
<div class="a" style="left:516.5px;top:988px;width:2px;height:22px;background:#25313f;"></div>
<div class="a" style="left:521.5px;top:988px;width:2px;height:22px;background:#25313f;"></div>
<svg class="a" style="left:550.5px;top:270.5px;" width="24" height="14" viewBox="0 0 24 14" fill="none"><path d="M2 2 L12 12 L22 2" stroke="#25313f" stroke-width="2.3" stroke-linecap="round" stroke-linejoin="round"/></svg>
<div class="a t" style="left:618.50px;top:258px;line-height:42px;font-size:28.25px;color:#25364a;font-family:'Liberation Sans',sans-serif;font-weight:700;letter-spacing:0.061px;">Log count</div>
<div class="a" style="left:2646px;top:248px;width:368px;height:63px;background:#fff;border:2px solid #e6e9ef;border-radius:5px;"></div>
<div class="a" style="left:2646px;top:248px;width:141px;height:63px;background:#e9ecf0;border-radius:5px 0 0 5px;"></div>
<div class="a t" style="left:2664.00px;top:258px;line-height:42px;font-size:29.75px;color:#25364a;font-family:'Liberation Sans',sans-serif;font-weight:700;letter-spacing:0.025px;">Interval</div>
<div class="a t" style="left:2803.50px;top:258px;line-height:42px;font-size:30.25px;color:#2a3947;font-family:'Liberation Sans',sans-serif;letter-spacing:-0.077px;">Auto</div>
<svg class="a" style="left:2972.5px;top:274.75px;" width="21" height="12.5" viewBox="0 0 21 12.5" fill="none"><path d="M2 2 L10.5 10.5 L19 2" stroke="#25313f" stroke-width="2.2" stroke-linecap="round" stroke-linejoin="round"/></svg>
<div class="a" style="left:639px;top:357px;width:1.5px;height:120px;background:#e3e6ee;"></div>
<div class="a" style="left:639px;top:476px;width:2311px;height:1.5px;background:#e3e6ee;"></div>
<div class="a t" style="left:581.96px;top:338.2px;line-height:36px;font-size:24px;color:#2a2e35;font-family:'Liberation Sans',sans-serif;">900</div>
<div class="a" style="left:631px;top:356.5px;width:8px;height:1.5px;background:#e3e6ee;"></div>
<div class="a t" style="left:581.96px;top:378.2px;line-height:36px;font-size:24px;color:#2a2e35;font-family:'Liberation Sans',sans-serif;">600</div>
<div class="a" style="left:631px;top:396.5px;width:8px;height:1.5px;background:#e3e6ee;"></div>
<div class="a t" style="left:581.96px;top:418.2px;line-height:36px;font-size:24px;color:#2a2e35;font-family:'Liberation Sans',sans-serif;">300</div>
<div class="a" style="left:631px;top:436.5px;width:8px;height:1.5px;background:#e3e6ee;"></div>
<div class="a t" style="left:608.65px;top:457.7px;line-height:36px;font-size:24px;color:#2a2e35;font-family:'Liberation Sans',sans-serif;">0</div>
<div class="a" style="left:631px;top:476px;width:8px;height:1.5px;background:#e3e6ee;"></div>
<div class="a" style="left:654.45px;top:477px;width:1.5px;height:9px;background:#e3e6ee;"></div>
<div class="a t" style="left:580.48px;top:486px;line-height:36px;font-size:24px;color:#2a2e35;font-family:'Liberation Sans',sans-serif;">Nov 17, 00:00</div>
<div class="a" style="left:940.15px;top:477px;width:1.5px;height:9px;background:#e3e6ee;"></div>
<div class="a t" style="left:866.18px;top:486px;line-height:36px;font-size:24px;color:#2a2e35;font-family:'Liberation Sans',sans-serif;">Nov 17, 06:00</div>
<div class="a" style="left:1224.35px;top:477px;width:1.5px;height:9px;background:#e3e6ee;"></div>
<div class="a t" style="left:1150.38px;top:486px;line-height:36px;font-size:24px;color:#2a2e35;font-family:'Liberation Sans',sans-serif;">Nov 17, 12:00</div>
<div class="a" style="left:1508.55px;top:477px;width:1.5px;height:9px;background:#e3e6ee;"></div>
<div class="a t" style="left:1434.58px;top:486px;line-height:36px;font-size:24px;color:#2a2e35;font-family:'Liberation Sans',sans-serif;">Nov 17, 18:00</div>
<div class="a" style="left:1793.25px;top:477px;width:1.5px;height:9px;background:#e3e6ee;"></div>
<div class="a t" style="left:1719.28px;top:486px;line-height:36px;font-size:24px;color:#2a2e35;font-family:'Liberation Sans',sans-serif;">Nov 18, 00:00</div>
<div class="a" style="left:2077.75px;top:477px;width:1.5px;height:9px;background:#e3e6ee;"></div>
<div class="a t" style="left:2003.78px;top:486px;line-height:36px;font-size:24px;color:#2a2e35;font-family:'Liberation Sans',sans-serif;">Nov 18, 06:00</div>
<div class="a" style="left:2363.95px;top:477px;width:1.5px;height:9px;background:#e3e6ee;"></div>
<div class="a t" style="left:2289.98px;top:486px;line-height:36px;font-size:24px;color:#2a2e35;font-family:'Liberation Sans',sans-serif;">Nov 18, 12:00</div>
<div class="a" style="left:2648.25px;top:477px;width:1.5px;height:9px;background:#e3e6ee;"></div>
<div class="a t" style="left:2574.28px;top:486px;line-height:36px;font-size:24px;color:#2a2e35;font-family:'Liberation Sans',sans-serif;">Nov 18, 18:00</div>
<div class="a" style="left:2932.25px;top:477px;width:1.5px;height:9px;background:#e3e6ee;"></div>
<div class="a t" style="left:2858.28px;top:486px;line-height:36px;font-size:24px;color:#2a2e35;font-family:'Liberation Sans',sans-serif;">Nov 19, 00:00</div>
<div class="a" style="left:686.12px;top:467.6px;width:33px;height:8.4px;background:#54b399;"></div>
<div class="a" style="left:733.54px;top:394px;width:33px;height:82px;background:#54b399;"></div>
<div class="a" style="left:780.96px;top:375.6px;width:33px;height:100.4px;background:#54b399;"></div>
<div class="a" style="left:828.38px;top:406.4px;width:33px;height:69.6px;background:#54b399;"></div>
<div class="a" style="left:875.8px;top:455.6px;width:33px;height:20.4px;background:#54b399;"></div>
<div class="a" style="left:923.22px;top:466px;width:33px;height:10px;background:#54b399;"></div>
<div class="a" style="left:970.64px;top:444.2px;width:33px;height:31.8px;background:#54b399;"></div>
<div class="a" style="left:1587.1px;top:447.7px;width:33px;height:28.3px;background:#54b399;"></div>
<div class="a" style="left:1681.94px;top:470.5px;width:33px;height:5.5px;background:#54b399;"></div>
<div class="a" style="left:1729.36px;top:473px;width:33px;height:3px;background:#54b399;"></div>
<div class="a" style="left:1776.78px;top:453.1px;width:33px;height:22.9px;background:#54b399;"></div>
<div class="a" style="left:1824.2px;top:472px;width:33px;height:4px;background:#54b399;"></div>
<div class="a" style="left:2885.5px;top:356px;width:24px;height:120px;background:#dfe1e5;"></div>
<div class="a t" style="left:553.80px;top:575px;line-height:42px;font-size:28.5px;color:#0b6bc0;font-family:'Liberation Sans',sans-serif;letter-spacing:0.066px;">Logs</div>
<div class="a t" style="left:648.70px;top:575px;line-height:42px;font-size:29.5px;color:#2a3947;font-family:'Liberation Sans',sans-serif;letter-spacing:-0.008px;">Visualization</div>
<div class="a" style="left:538px;top:630px;width:95px;height:4px;background:#0b6bc0;"></div>
<div class="a t" style="left:546.00px;top:644px;line-height:42px;font-size:30px;color:#2a3947;font-family:'Liberation Sans',sans-serif;letter-spacing:0.034px;"><b>2,889</b> of <b>2,889</b> results in <b>622</b> ms</div>
<div class="a" style="left:2012px;top:646px;width:88px;height:40px;background:#eceef1;border-radius:20px;"></div>
<div class="a" style="left:2012px;top:646px;width:40px;height:40px;background:#fff;border:2px solid #b9bdc6;border-radius:20px;"></div>
<svg class="a" style="left:2063px;top:654px;" width="24" height="24" viewBox="0 0 24 24" fill="none"><path d="M3 3 L20 20 M20 3 L3 20" stroke="#25313f" stroke-width="2.2" stroke-linecap="round"/></svg>
<div class="a t" style="left:2117.00px;top:644px;line-height:42px;font-size:28.75px;color:#2a3947;font-family:'Liberation Sans',sans-serif;letter-spacing:-0.048px;">Wrap cell text</div>
<div class="a t" style="left:2314.00px;top:644px;line-height:42px;font-size:29.5px;color:#0b6bc0;font-family:'Liberation Sans',sans-serif;letter-spacing:-0.052px;">Export</div>
<svg class="a" style="left:2419px;top:659.25px;" width="23" height="13.5" viewBox="0 0 23 13.5" fill="none"><path d="M2 2 L11.5 11.5 L21 2" stroke="#0b6bc0" stroke-width="2.3" stroke-linecap="round" stroke-linejoin="round"/></svg>
<div class="a t" style="left:2488.00px;top:644px;line-height:42px;font-size:29px;color:#0b6bc0;font-family:'Liberation Sans',sans-serif;letter-spacing:0.036px;">Add to dashboard</div>
<div class="a" style="left:2738px;top:624px;width:276px;height:78px;background:#fff;border:10px solid #fd9e1b;"></div>
<div class="a t" style="left:2754.50px;top:644px;line-height:42px;font-size:30px;color:#0b6bc0;font-family:'Liberation Sans',sans-serif;letter-spacing:0.020px;">Start Investigation</div>
<div class="a t" style="left:598.00px;top:702px;line-height:36px;font-size:24px;color:#2a3947;font-family:'Liberation Mono',monospace;font-weight:700;">Time</div>
<div class="a t" style="left:1147.00px;top:702px;line-height:36px;font-size:24px;color:#2a3947;font-family:'Liberation Mono',monospace;font-weight:700;">_source</div>
<div class="a" style="left:2998px;top:705px;width:12px;height:183px;background:#a9aeb7;border-radius:6px;"></div>
<svg class="a" style="left:562.5px;top:757px;" width="15" height="26" viewBox="0 0 15 26" fill="none"><path d="M2 2 L13 13 L2 24" stroke="#25313f" stroke-width="2.3" stroke-linecap="round" stroke-linejoin="round"/></svg>
<div class="a t" style="left:598.00px;top:752px;line-height:36px;font-size:24px;color:#2a3947;font-family:'Liberation Mono',monospace;-webkit-text-stroke:.25px;">Nov 17, 2025 @ 22:33:17.463</div>
<div class="r" style="top:747.5px"><i>traceID:</i><u>9d3d23f802da5658da427c6861149741</u><i>spanID:</i><u>96f4c0f5492d0597</u><i>operationName:</i><u>GET</u><i>duration:</i><u>4,786,918,398</u><i style="padding-right:60px;margin-right:0">startTimeM…</i></div>
<svg class="a" style="left:562.5px;top:813px;" width="15" height="26" viewBox="0 0 15 26" fill="none"><path d="M2 2 L13 13 L2 24" stroke="#25313f" stroke-width="2.3" stroke-linecap="round" stroke-linejoin="round"/></svg>
<div class="a t" style="left:598.00px;top:808px;line-height:36px;font-size:24px;color:#2a3947;font-family:'Liberation Mono',monospace;-webkit-text-stroke:.25px;">Nov 17, 2025 @ 22:33:17.463</div>
<div class="r" style="top:803.5px"><i>traceID:</i><u>9d3d23f802da5658da427c6861149741</u><i>spanID:</i><u>96f4c0f5492d0597</u><i>operationName:</i><u>GET</u><i>duration:</i><u>4,786,918,398</u><i style="padding-right:60px;margin-right:0">startTimeM…</i></div>
<svg class="a" style="left:562.5px;top:869px;" width="15" height="26" viewBox="0 0 15 26" fill="none"><path d="M2 2 L13 13 L2 24" stroke="#25313f" stroke-width="2.3" stroke-linecap="round" stroke-linejoin="round"/></svg>
<div class="a t" style="left:598.00px;top:864px;line-height:36px;font-size:24px;color:#2a3947;font-family:'Liberation Mono',monospace;-webkit-text-stroke:.25px;">Nov 17, 2025 @ 22:33:17.463</div>
<div class="r" style="top:859.5px"><i>traceID:</i><u>9d3d23f802da5658da427c6861149741</u><i>spanID:</i><u>96f4c0f5492d0597</u><i>operationName:</i><u>GET</u><i>duration:</i><u>4,786,918,398</u><i style="padding-right:60px;margin-right:0">startTimeM…</i></div>
<svg class="a" style="left:562.5px;top:925px;" width="15" height="26" viewBox="0 0 15 26" fill="none"><path d="M2 2 L13 13 L2 24" stroke="#25313f" stroke-width="2.3" stroke-linecap="round" stroke-linejoin="round"/></svg>
<div class="a t" style="left:598.00px;top:920px;line-height:36px;font-size:24px;color:#2a3947;font-family:'Liberation Mono',monospace;-webkit-text-stroke:.25px;">Nov 17, 2025 @ 22:33:17.463</div>
<div class="r" style="top:915.5px"><i>traceID:</i><u>9d3d23f802da5658da427c6861149741</u><i>spanID:</i><u>96f4c0f5492d0597</u><i>operationName:</i><u>GET</u><i>duration:</i><u>4,786,918,398</u><i style="padding-right:60px;margin-right:0">startTimeM…</i></div>
<svg class="a" style="left:562.5px;top:981px;" width="15" height="26" viewBox="0 0 15 26" fill="none"><path d="M2 2 L13 13 L2 24" stroke="#25313f" stroke-width="2.3" stroke-linecap="round" stroke-linejoin="round"/></svg>
<div class="a t" style="left:598.00px;top:976px;line-height:36px;font-size:24px;color:#2a3947;font-family:'Liberation Mono',monospace;-webkit-text-stroke:.25px;">Nov 17, 2025 @ 22:33:05.179</div>
<div class="r" style="top:971.5px"><i>traceID:</i><u>dc97a34ecb26880230f374b198fa987f</u><i>spanID:</i><u>7785ad31fb0590c1</u><i>operationName:</i><u>POST</u><i>duration:</i><u>4,786,915,967</u><i style="padding-right:60px;margin-right:0">startTime…</i></div>
<svg class="a" style="left:562.5px;top:1037px;" width="15" height="26" viewBox="0 0 15 26" fill="none"><path d="M2 2 L13 13 L2 24" stroke="#25313f" stroke-width="2.3" stroke-linecap="round" stroke-linejoin="round"/></svg>
<div class="a t" style="left:598.00px;top:1032px;line-height:36px;font-size:24px;color:#2a3947;font-family:'Liberation Mono',monospace;-webkit-text-stroke:.25px;">Nov 17, 2025 @ 22:33:17.281</div>
<div class="r" style="top:1027.5px"><i>traceID:</i><u>5c746fc9fb547cdb58d698597c809bf7</u><i>spanID:</i><u>da09b3d48b521cc6</u><i>operationName:</i><u>GET</u><i>duration:</i><u>4,786,909,823</u><i style="padding-right:60px;margin-right:0">startTimeM…</i></div>
<svg class="a" style="left:562.5px;top:1093px;" width="15" height="26" viewBox="0 0 15 26" fill="none"><path d="M2 2 L13 13 L2 24" stroke="#25313f" stroke-width="2.3" stroke-linecap="round" stroke-linejoin="round"/></svg>
<div class="a t" style="left:598.00px;top:1088px;line-height:36px;font-size:24px;color:#2a3947;font-family:'Liberation Mono',monospace;-webkit-text-stroke:.25px;">Nov 17, 2025 @ 22:33:17.281</div>
<div class="r" style="top:1083.5px"><i>traceID:</i><u>5c746fc9fb547cdb58d698597c809bf7</u><i>spanID:</i><u>da09b3d48b521cc6</u><i>operationName:</i><u>GET</u><i>duration:</i><u>4,786,909,823</u><i style="padding-right:60px;margin-right:0">startTimeM…</i></div>
<svg class="a" style="left:562.5px;top:1149px;" width="15" height="26" viewBox="0 0 15 26" fill="none"><path d="M2 2 L13 13 L2 24" stroke="#25313f" stroke-width="2.3" stroke-linecap="round" stroke-linejoin="round"/></svg>
<div class="a t" style="left:598.00px;top:1144px;line-height:36px;font-size:24px;color:#2a3947;font-family:'Liberation Mono',monospace;-webkit-text-stroke:.25px;">Nov 17, 2025 @ 22:33:17.281</div>
<div class="r" style="top:1139.5px"><i>traceID:</i><u>5c746fc9fb547cdb58d698597c809bf7</u><i>spanID:</i><u>da09b3d48b521cc6</u><i>operationName:</i><u>GET</u><i>duration:</i><u>4,786,909,823</u><i style="padding-right:60px;margin-right:0">startTimeM…</i></div>
<svg class="a" style="left:562.5px;top:1205px;" width="15" height="26" viewBox="0 0 15 26" fill="none"><path d="M2 2 L13 13 L2 24" stroke="#25313f" stroke-width="2.3" stroke-linecap="round" stroke-linejoin="round"/></svg>
<div class="a t" style="left:598.00px;top:1200px;line-height:36px;font-size:24px;color:#2a3947;font-family:'Liberation Mono',monospace;-webkit-text-stroke:.25px;">Nov 17, 2025 @ 22:33:17.281</div>
<div class="r" style="top:1195.5px"><i>traceID:</i><u>5c746fc9fb547cdb58d698597c809bf7</u><i>spanID:</i><u>da09b3d48b521cc6</u><i>operationName:</i><u>GET</u><i>duration:</i><u>4,786,909,823</u><i style="padding-right:60px;margin-right:0">startTimeM…</i></div>
<svg class="a" style="left:562.5px;top:1261px;" width="15" height="26" viewBox="0 0 15 26" fill="none"><path d="M2 2 L13 13 L2 24" stroke="#25313f" stroke-width="2.3" stroke-linecap="round" stroke-linejoin="round"/></svg>
<div class="a t" style="left:598.00px;top:1256px;line-height:36px;font-size:24px;color:#2a3947;font-family:'Liberation Mono',monospace;-webkit-text-stroke:.25px;">Nov 17, 2025 @ 22:33:09.747</div>
<div class="r" style="top:1251.5px"><i>traceID:</i><u>7190c0f2e0c839b638223ec39013d91a</u><i>spanID:</i><u>c4adb30f0f19a395</u><i>operationName:</i><u>POST</u><i>duration:</i><u>4,786,903,317</u><i style="padding-right:60px;margin-right:0">startTime…</i></div>
<svg class="a" style="left:562.5px;top:1317px;" width="15" height="26" viewBox="0 0 15 26" fill="none"><path d="M2 2 L13 13 L2 24" stroke="#25313f" stroke-width="2.3" stroke-linecap="round" stroke-linejoin="round"/></svg>
<div class="a t" style="left:598.00px;top:1312px;line-height:36px;font-size:24px;color:#2a3947;font-family:'Liberation Mono',monospace;-webkit-text-stroke:.25px;">Nov 17, 2025 @ 22:33:06.525</div>
<div class="r" style="top:1307.5px"><i>traceID:</i><u>03dc5ea08aecffcca69cab4310433c29</u><i>spanID:</i><u>a464856b581497d0</u><i>operationName:</i><u>GET</u><i>duration:</i><u>4,786,901,961</u><i style="padding-right:60px;margin-right:0">startTimeM…</i></div>
<svg class="a" style="left:562.5px;top:1373px;" width="15" height="26" viewBox="0 0 15 26" fill="none"><path d="M2 2 L13 13 L2 24" stroke="#25313f" stroke-width="2.3" stroke-linecap="round" stroke-linejoin="round"/></svg>
<div class="a t" style="left:598.00px;top:1368px;line-height:36px;font-size:24px;color:#2a3947;font-family:'Liberation Mono',monospace;-webkit-text-stroke:.25px;">Nov 17, 2025 @ 22:33:10.583</div>
<div class="r" style="top:1363.5px"><i>traceID:</i><u>10cead317124c071b5b64b59dbc9a34c</u><i>spanID:</i><u>cb3daa2eb946261f</u><i>operationName:</i><u>POST</u><i>duration:</i><u>4,786,898,776</u><i style="padding-right:60px;margin-right:0">startTime…</i></div>
<svg class="a" style="left:562.5px;top:1429px;" width="15" height="26" viewBox="0 0 15 26" fill="none"><path d="M2 2 L13 13 L2 24" stroke="#25313f" stroke-width="2.3" stroke-linecap="round" stroke-linejoin="round"/></svg>
<div class="a t" style="left:598.00px;top:1424px;line-height:36px;font-size:24px;color:#2a3947;font-family:'Liberation Mono',monospace;-webkit-text-stroke:.25px;">Nov 17, 2025 @ 22:33:09.389</div>
<div class="r" style="top:1419.5px"><i>traceID:</i><u>2d58934b8c0d7711214601d2d51c1e04</u><i>spanID:</i><u>fe0a514862ecf588</u><i>operationName:</i><u>POST</u><i>duration:</i><u>4,786,897,513</u><i style="padding-right:60px;margin-right:0">startTime…</i></div>
<svg class="a" style="left:562.5px;top:1485px;" width="15" height="26" viewBox="0 0 15 26" fill="none"><path d="M2 2 L13 13 L2 24" stroke="#25313f" stroke-width="2.3" stroke-linecap="round" stroke-linejoin="round"/></svg>
<div class="a t" style="left:598.00px;top:1480px;line-height:36px;font-size:24px;color:#2a3947;font-family:'Liberation Mono',monospace;-webkit-text-stroke:.25px;">Nov 17, 2025 @ 05:12:44.210</div>
<div class="r" style="top:1475.5px"><i>traceID:</i><u>15f24a8c54b2885c1bfc71636d613acd</u><i>spanID:</i><u>04222ad371dce8db</u><i>operationName:</i><u>POST</u><i>duration:</i><u>4,510,340,726</u><i style="padding-right:60px;margin-right:0">startTime…</i></div>
<svg class="a" style="left:562.5px;top:1541px;" width="15" height="26" viewBox="0 0 15 26" fill="none"><path d="M2 2 L13 13 L2 24" stroke="#25313f" stroke-width="2.3" stroke-linecap="round" stroke-linejoin="round"/></svg>
<div class="a t" style="left:598.00px;top:1536px;line-height:36px;font-size:24px;color:#2a3947;font-family:'Liberation Mono',monospace;-webkit-text-stroke:.25px;">Nov 17, 2025 @ 05:12:44.210</div>
<div class="r" style="top:1531.5px"><i>traceID:</i><u>15f24a8c54b2885c1bfc71636d613acd</u><i>spanID:</i><u>04222ad371dce8db</u><i>operationName:</i><u>POST</u><i>duration:</i><u>4,510,340,726</u><i style="padding-right:60px;margin-right:0">startTime…</i></div>
<svg class="a" style="left:562.5px;top:1597px;" width="15" height="26" viewBox="0 0 15 26" fill="none"><path d="M2 2 L13 13 L2 24" stroke="#25313f" stroke-width="2.3" stroke-linecap="round" stroke-linejoin="round"/></svg>
<div class="a t" style="left:598.00px;top:1592px;line-height:36px;font-size:24px;color:#2a3947;font-family:'Liberation Mono',monospace;-webkit-text-stroke:.25px;">Nov 17, 2025 @ 05:12:44.210</div>
<div class="r" style="top:1587.5px"><i>traceID:</i><u>15f24a8c54b2885c1bfc71636d613acd</u><i>spanID:</i><u>04222ad371dce8db</u><i>operationName:</i><u>POST</u><i>duration:</i><u>4,510,340,726</u><i style="padding-right:60px;margin-right:0">startTime…</i></div>
<svg class="a" style="left:562.5px;top:1653px;" width="15" height="26" viewBox="0 0 15 26" fill="none"><path d="M2 2 L13 13 L2 24" stroke="#25313f" stroke-width="2.3" stroke-linecap="round" stroke-linejoin="round"/></svg>
<div class="a t" style="left:598.00px;top:1648px;line-height:36px;font-size:24px;color:#2a3947;font-family:'Liberation Mono',monospace;-webkit-text-stroke:.25px;">Nov 17, 2025 @ 05:12:44.210</div>
<div class="r" style="top:1643.5px"><i>traceID:</i><u>15f24a8c54b2885c1bfc71636d613acd</u><i>spanID:</i><u>04222ad371dce8db</u><i>operationName:</i><u>POST</u><i>duration:</i><u>4,510,340,726</u><i style="padding-right:60px;margin-right:0">startTime…</i></div>
<svg class="a" style="left:562.5px;top:1709px;" width="15" height="26" viewBox="0 0 15 26" fill="none"><path d="M2 2 L13 13 L2 24" stroke="#25313f" stroke-width="2.3" stroke-linecap="round" stroke-linejoin="round"/></svg>
<div class="a t" style="left:598.00px;top:1704px;line-height:36px;font-size:24px;color:#2a3947;font-family:'Liberation Mono',monospace;-webkit-text-stroke:.25px;">Nov 17, 2025 @ 05:12:44.210</div>
<div class="r" style="top:1699.5px"><i>traceID:</i><u>15f24a8c54b2885c1bfc71636d613acd</u><i>spanID:</i><u>04222ad371dce8db</u><i>operationName:</i><u>POST</u><i>duration:</i><u>4,510,340,726</u><i style="padding-right:60px;margin-right:0">startTime…</i></div>
<svg class="a" style="left:3056px;top:44px;" width="32" height="32" viewBox="0 0 32 32" fill="none"><path d="M5.5 3 H26 a3 3 0 0 1 3 3 V20.5 a3 3 0 0 1 -3 3 H16 L9.5 29.3 a0.8 0.8 0 0 1 -1.3 -0.6 V23.5 H5.5 a3 3 0 0 1 -3 -3 V6 a3 3 0 0 1 3 -3 Z" stroke="#4a5b6c" stroke-width="2" stroke-linejoin="round"/></svg>
<div class="a t" style="left:3104.50px;top:32px;line-height:54px;font-size:35.5px;color:#1a1c21;font-family:'Liberation Sans',sans-serif;font-weight:700;">find all requests with latenc…</div>
<svg class="a" style="left:3680px;top:42px;" width="34" height="36" viewBox="0 0 34 36" fill="none"><path d="M17 5.8 H5.3 a2 2 0 0 0 -2 2 V30.5 a2 2 0 0 0 2 2 H26.5 a2 2 0 0 0 2 -2 V16.4" stroke="#25313f" stroke-width="2" stroke-linecap="round"/><path d="M26.8 2.6 L31.6 7.2 L17.5 21.1 H12.8 V16.4 Z" stroke="#25313f" stroke-width="2" stroke-linejoin="round"/><path d="M12.8 16.4 L17.5 21.1 H12.8 Z" fill="#25313f"/><path d="M9 26.9 H23.2" stroke="#25313f" stroke-width="2" stroke-linecap="round"/></svg>
<svg class="a" style="left:3772px;top:48px;" width="24" height="24" viewBox="0 0 24 24" fill="none"><path d="M3.1 3.1 L20.9 20.9 M20.9 3.1 L3.1 20.9" stroke="#25313f" stroke-width="2" stroke-linecap="round"/></svg>
<div class="a" style="left:3102px;top:124px;width:698px;height:136px;background:#e4e5e9;border:10px solid #fd9e1b;"></div>
<div class="a" style="left:3112px;top:248px;width:678px;height:2px;background:#f4f4f6;"></div>
<div class="a t" style="left:3120.50px;top:148px;line-height:42px;font-size:29.5px;color:#25364a;font-family:'Liberation Sans',sans-serif;letter-spacing:-0.039px;">find all requests with latency greater than 10</div>
<div class="a t" style="left:3120.50px;top:190px;line-height:42px;font-size:29.5px;color:#25364a;font-family:'Liberation Sans',sans-serif;letter-spacing:-0.062px;">seconds</div>
<div class="a" style="left:3802px;top:123px;width:16px;height:1247px;background:#a9aeb7;border-radius:8px;"></div>
<div class="a t" style="left:3072.00px;top:278.5px;line-height:42px;font-size:29.25px;color:#25364a;font-family:'Liberation Sans',sans-serif;letter-spacing:0.034px;">I&#x27;ll search for all requests with latency greater than 10</div>
<div class="a t" style="left:3072.00px;top:320.5px;line-height:42px;font-size:29.25px;color:#25364a;font-family:'Liberation Sans',sans-serif;letter-spacing:-0.005px;">seconds (10,000,000 microseconds, assuming</div>
<div class="a t" style="left:3072.00px;top:362.5px;line-height:42px;font-size:29.5px;color:#25364a;font-family:'Liberation Sans',sans-serif;letter-spacing:-0.048px;">duration is in microseconds) in the jaeger-span index.</div>
<svg class="a" style="left:3055px;top:442px;" width="34" height="34" viewBox="0 0 34 34" fill="none"><circle cx="17" cy="17" r="14.8" stroke="#0a8a63" stroke-width="2.2"/><path d="M9.5 17 L15.5 23 L25 12" stroke="#0a8a63" stroke-width="2.2" stroke-linecap="round" stroke-linejoin="round"/></svg>
<div class="a t" style="left:3096.50px;top:437px;line-height:42px;font-size:28.75px;color:#25364a;font-family:'Liberation Sans',sans-serif;letter-spacing:0.056px;">1 tasks performed</div>
<svg class="a" style="left:3762px;top:446px;" width="15" height="26" viewBox="0 0 15 26" fill="none"><path d="M2 2 L13 13 L2 24" stroke="#25313f" stroke-width="2.3" stroke-linecap="round" stroke-linejoin="round"/></svg>
<div class="a t" style="left:3072.00px;top:511px;line-height:42px;font-size:29px;color:#25364a;font-family:'Liberation Sans',sans-serif;letter-spacing:-0.054px;">The query has been executed! Here&#x27;s what it does:</div>
<div class="a" style="left:3095px;top:603.5px;width:10px;height:10px;background:#25364a;border-radius:5px;"></div>
<div class="a t" style="left:3120.00px;top:584.5px;line-height:42px;font-size:29.5px;color:#25364a;font-family:'Liberation Sans',sans-serif;letter-spacing:-0.053px;"><b>Filter</b>:</div>
<div class="a" style="left:3120px;top:628.3px;width:658px;height:53.5px;background:#f1f2f5;border-radius:8px;"></div>
<div class="a t" style="left:3130.80px;top:636.3px;line-height:39px;font-size:26px;color:#25364a;font-family:'Liberation Mono',monospace;-webkit-text-stroke:.25px;">duration &gt; 10,000,000</div>
<div class="a t" style="left:3121.50px;top:680.5px;line-height:42px;font-size:29px;color:#25364a;font-family:'Liberation Sans',sans-serif;letter-spacing:0.050px;"><span style="display:inline-block;width:18px;letter-spacing:0"><span style="display:inline-block;transform:scaleX(.643);transform-origin:0 50%">—</span></span> since Jaeger stores duration in <b>microseconds</b>,</div>
<div class="a" style="left:3120px;top:724.2px;width:658px;height:53.5px;background:#f1f2f5;border-radius:8px;"></div>
<div class="a t" style="left:3130.80px;top:732.2px;line-height:39px;font-size:26px;color:#25364a;font-family:'Liberation Mono',monospace;-webkit-text-stroke:.25px;">10,000,000 µs = 10 seconds</div>
<div class="a" style="left:3095px;top:803.5px;width:10px;height:10px;background:#25364a;border-radius:5px;"></div>
<div class="a t" style="left:3120.00px;top:784.5px;line-height:42px;font-size:28.75px;color:#25364a;font-family:'Liberation Sans',sans-serif;letter-spacing:0.022px;"><b>Fields returned</b>:</div>
<div class="a" style="left:3168px;top:828.3px;width:610px;height:53.5px;background:#f1f2f5;border-radius:8px;"></div>
<div class="a t" style="left:3178.80px;top:836.3px;line-height:39px;font-size:26px;color:#25364a;font-family:'Liberation Mono',monospace;-webkit-text-stroke:.25px;">traceID</div>
<div class="a" style="left:3143.5px;top:850.3px;width:10px;height:10px;border:1.6px solid #25364a;border-radius:5px;"></div>
<div class="a t" style="left:3170.00px;top:880.8px;line-height:42px;font-size:30px;color:#25364a;font-family:'Liberation Sans',sans-serif;letter-spacing:0.060px;"><span style="display:inline-block;width:18px;letter-spacing:0"><span style="display:inline-block;transform:scaleX(.643);transform-origin:0 50%">—</span></span> the trace identifier</div>
<div class="a" style="left:3168px;top:932px;width:610px;height:53.5px;background:#f1f2f5;border-radius:8px;"></div>
<div class="a t" style="left:3178.80px;top:940px;line-height:39px;font-size:26px;color:#25364a;font-family:'Liberation Mono',monospace;-webkit-text-stroke:.25px;">spanID</div>
<div class="a" style="left:3143.5px;top:954px;width:10px;height:10px;border:1.6px solid #25364a;border-radius:5px;"></div>
<div class="a t" style="left:3170.00px;top:984.5px;line-height:42px;font-size:29.75px;color:#25364a;font-family:'Liberation Sans',sans-serif;letter-spacing:0.046px;"><span style="display:inline-block;width:18px;letter-spacing:0"><span style="display:inline-block;transform:scaleX(.643);transform-origin:0 50%">—</span></span> the span identifier</div>
<div class="a" style="left:3168px;top:1035.7px;width:610px;height:53.5px;background:#f1f2f5;border-radius:8px;"></div>
<div class="a t" style="left:3178.80px;top:1043.7px;line-height:39px;font-size:26px;color:#25364a;font-family:'Liberation Mono',monospace;-webkit-text-stroke:.25px;">operationName</div>
<div class="a" style="left:3143.5px;top:1057.7px;width:10px;height:10px;border:1.6px solid #25364a;border-radius:5px;"></div>
<div class="a t" style="left:3170.00px;top:1088.2px;line-height:42px;font-size:30px;color:#25364a;font-family:'Liberation Sans',sans-serif;letter-spacing:0.011px;"><span style="display:inline-block;width:18px;letter-spacing:0"><span style="display:inline-block;transform:scaleX(.643);transform-origin:0 50%">—</span></span> the name of the operation/request</div>
<div class="a" style="left:3168px;top:1139.4px;width:610px;height:53.5px;background:#f1f2f5;border-radius:8px;"></div>
<div class="a t" style="left:3178.80px;top:1147.4px;line-height:39px;font-size:26px;color:#25364a;font-family:'Liberation Mono',monospace;-webkit-text-stroke:.25px;">duration</div>
<div class="a" style="left:3143.5px;top:1161.4px;width:10px;height:10px;border:1.6px solid #25364a;border-radius:5px;"></div>
<div class="a t" style="left:3170.00px;top:1191.9px;line-height:42px;font-size:29.5px;color:#25364a;font-family:'Liberation Sans',sans-serif;letter-spacing:0.043px;"><span style="display:inline-block;width:18px;letter-spacing:0"><span style="display:inline-block;transform:scaleX(.643);transform-origin:0 50%">—</span></span> latency in microseconds</div>
<div class="a" style="left:3168px;top:1243.1px;width:610px;height:53.5px;background:#f1f2f5;border-radius:8px;"></div>
<div class="a t" style="left:3178.80px;top:1251.1px;line-height:39px;font-size:26px;color:#25364a;font-family:'Liberation Mono',monospace;-webkit-text-stroke:.25px;">startTimeMillis</div>
<div class="a" style="left:3143.5px;top:1265.1px;width:10px;height:10px;border:1.6px solid #25364a;border-radius:5px;"></div>
<div class="a t" style="left:3170.00px;top:1295.6px;line-height:42px;font-size:29.75px;color:#25364a;font-family:'Liberation Sans',sans-serif;letter-spacing:0.095px;"><span style="display:inline-block;width:18px;letter-spacing:0"><span style="display:inline-block;transform:scaleX(.643);transform-origin:0 50%">—</span></span> when the request started</div>
<div class="a" style="left:3095px;top:1365px;width:10px;height:10px;background:#25364a;border-radius:5px;"></div>
<div class="a t" style="left:3120.00px;top:1346px;line-height:42px;font-size:29px;color:#25364a;font-family:'Liberation Sans',sans-serif;letter-spacing:0.059px;"><b>Sorted</b> by</div>
<div class="a" style="left:3120px;top:1389px;width:658px;height:53.5px;background:#f1f2f5;border-radius:8px;"></div>
<div class="a t" style="left:3130.80px;top:1397px;line-height:39px;font-size:26px;color:#25364a;font-family:'Liberation Mono',monospace;-webkit-text-stroke:.25px;">duration</div>
<div class="a t" style="left:3120.00px;top:1442px;line-height:42px;font-size:29.25px;color:#25364a;font-family:'Liberation Sans',sans-serif;letter-spacing:0.032px;">in <b>descending order</b> <span style="display:inline-block;width:18px;letter-spacing:0"><span style="display:inline-block;transform:scaleX(.643);transform-origin:0 50%">—</span></span> slowest requests first</div>
<div class="a t" style="left:3072.50px;top:1515.5px;line-height:42px;font-size:28.75px;color:#25364a;font-family:'Liberation Sans',sans-serif;letter-spacing:0.048px;">The results are now displayed in the Explore view,</div>
<div class="a" style="left:3056px;top:1567px;width:768px;height:175px;background:#fff;border:2px solid #dfe3ec;"></div>
<div class="a t" style="left:3072.50px;top:1582.5px;line-height:42px;font-size:28.75px;color:#69707d;font-family:'Liberation Sans',sans-serif;letter-spacing:-0.034px;">How can I help you today?</div>
<div class="a" style="left:3760px;top:1678px;width:48px;height:48px;background:#bdc2cc;border-radius:8px;"></div>
<svg class="a" style="left:3770px;top:1688px;" width="28" height="28" viewBox="0 0 28 28" fill="none"><path d="M14 24 V5 M5 13.5 L14 4.5 L23 13.5" stroke="#7b828e" stroke-width="2.2" stroke-linecap="round" stroke-linejoin="round"/></svg>
<div class="a" style="left:3052px;top:870px;width:2px;height:24px;background:#25313f;"></div>
<div class="a" style="left:3058.5px;top:870px;width:2px;height:24px;background:#25313f;"></div>
<svg class="a" style="left:3800px;top:1718px;" width="40" height="40" viewBox="0 0 40 40" fill="none"><path d="M40 8 A32 32 0 0 1 8 40 H40 Z" fill="#c9ccd3"/><path d="M40 15 Q38 32 28 40 H40 Z" fill="#4a4a48"/><path d="M40 15 L36.8 22 L35.5 31 L40 33 Z" fill="#e6e23a"/></svg>
</div></body></html>
